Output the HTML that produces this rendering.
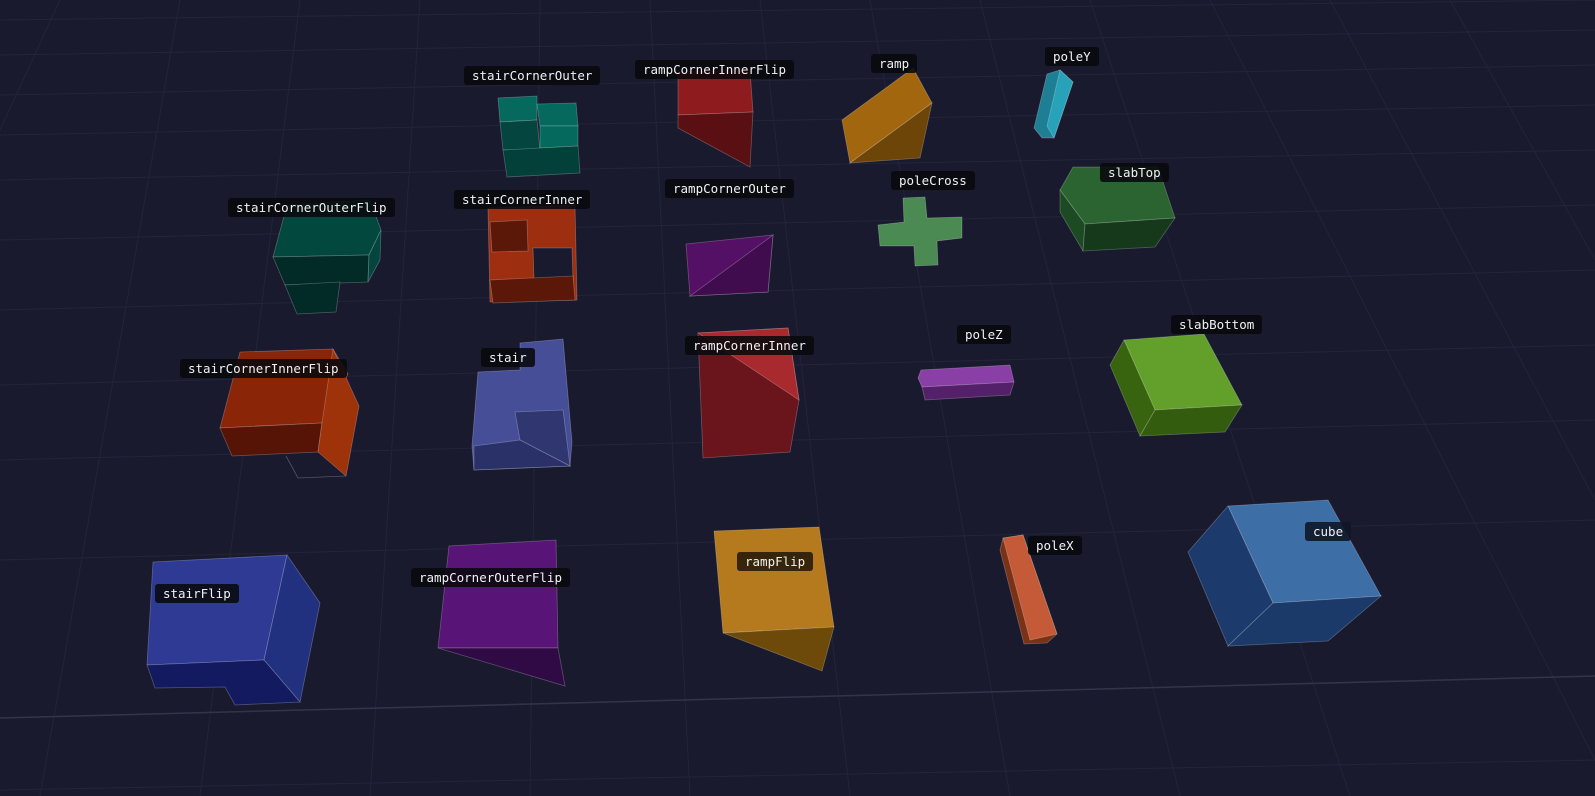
<!DOCTYPE html>
<html><head><meta charset="utf-8"><style>
html,body{margin:0;padding:0;background:#191a2e;width:1595px;height:796px;overflow:hidden}
svg{position:absolute;left:0;top:0}
.l{position:absolute;background:rgba(8,9,14,.88);color:#f2f2f2;font:12.5px/19px "DejaVu Sans Mono","Liberation Mono",monospace;padding:0 8px;border-radius:3px;white-space:nowrap}
</style></head><body>
<svg width="1595" height="796" viewBox="0 0 1595 796">
<g stroke="#23243a" stroke-width="1" fill="none">
<path d="M0 20 L1595 0 M0 55 L1595 30 M0 95 L1595 65 M0 135 L1595 105 M0 180 L1595 150 M0 240 L1595 205 M0 310 L1595 270 M0 385 L1595 345 M0 460 L1595 420 M0 560 L1595 520 M0 790 L1595 760"/>
<path d="M60 0 L0 130 M180 0 L40 796 M300 0 L200 796 M420 0 L370 796 M540 0 L530 796 M650 0 L690 796 M760 0 L850 796 M870 0 L1010 796 M980 0 L1180 796 M1090 0 L1350 796 M1210 0 L1595 760 M1330 0 L1595 500 M1450 0 L1595 260"/>
</g>
<path d="M0 718 L1595 676" stroke="#33344a" stroke-width="1.5"/>
<g stroke-width=".8" stroke-opacity=".25" stroke="#fff">
<polygon points="498,98 537,96 537,120 500,122" fill="#05695d"/>
<polygon points="500,122 537,120 540,150 503,150" fill="#04463f"/>
<polygon points="537,104 576,103 578,126 540,126" fill="#05695d"/>
<polygon points="540,126 578,126 578,146 540,148" fill="#05695d"/>
<polygon points="503,150 578,146 580,173 507,177" fill="#03403a"/>
<polygon points="678,72 750,70 753,112 678,115" fill="#8e1c1f"/>
<polygon points="678,115 753,112 750,167 678,128" fill="#5a0f12"/>
<polygon points="842,120 913,68 932,103 850,163" fill="#a2670e"/>
<polygon points="850,163 932,103 920,158" fill="#6e4508"/>
<polygon points="1047,74 1060,70 1073,82 1054,138 1042,138 1034,128" fill="#1e7f94"/>
<polygon points="1060,70 1073,82 1054,138 1047,126" fill="#28a2b8"/>
<polygon points="287,205 370,200 381,230 369,255 273,257" fill="#03483f"/>
<polygon points="273,257 369,255 368,282 285,285" fill="#022a27"/>
<polygon points="369,255 381,230 380,260 368,282" fill="#04463f"/>
<polygon points="285,285 340,282 336,312 297,314" fill="#022a27"/>
<polygon points="488,208 575,205 577,300 490,302" fill="#9e2e10"/>
<polygon points="490,222 527,220 528,251 492,252" fill="#5b1808"/>
<polygon points="533,248 572,248 573,280 534,280" fill="#191a2e"/>
<polygon points="490,280 573,276 575,300 493,303" fill="#5b1808"/>
<polygon points="686,244 773,235 768,292 690,296" fill="#531064"/>
<polygon points="773,235 768,292 690,296" fill="#410c4e"/>
<polygon points="903,198 925,197 927,218 962,217 962,238 937,241 938,265 915,266 914,246 880,246 878,225 904,222" fill="#4c8a54"/>
<polygon points="1073,167 1158,167 1175,218 1085,224 1060,190" fill="#2b6331"/>
<polygon points="1060,190 1085,224 1083,251 1060,212" fill="#1c4a22"/>
<polygon points="1085,224 1175,218 1155,247 1083,251" fill="#15391a"/>
<polygon points="921,370 1010,365 1014,382 922,387 918,378" fill="#8a3fa6"/>
<polygon points="922,387 1014,382 1010,395 925,400" fill="#55206a"/>
<polygon points="1124,340 1204,334 1242,405 1155,410" fill="#62a02b"/>
<polygon points="1110,365 1124,340 1155,410 1140,436" fill="#38640f"/>
<polygon points="1155,410 1242,405 1225,432 1140,436" fill="#345c0e"/>
<polygon points="240,352 333,349 348,374 322,423 220,428" fill="#8a2508"/>
<polygon points="220,428 322,423 318,452 232,456" fill="#551405"/>
<polygon points="333,349 359,406 346,476 318,452 322,423" fill="#9e3208"/>
<polyline points="286,456 298,478 346,476" fill="none"/>
<polygon points="520,343 563,339 572,442 570,466 474,470 472,446 478,372 520,370" fill="#464e98"/>
<polygon points="515,412 563,410 570,466 520,440" fill="#2f3670"/>
<polygon points="474,446 520,440 570,466 474,470" fill="#2a3168"/>
<polygon points="698,333 788,328 799,400 790,452 703,458" fill="#6a141c"/>
<polygon points="698,333 788,328 799,400" fill="#a82a2e"/>
<polygon points="153,562 287,555 264,660 147,665" fill="#2e3a94"/>
<polygon points="287,555 320,603 300,702 264,660" fill="#223080"/>
<polygon points="147,665 264,660 300,702 235,705 225,687 155,688" fill="#141a60"/>
<polygon points="449,546 556,540 558,648 438,648" fill="#581476"/>
<polygon points="438,648 558,648 565,686" fill="#300a45"/>
<polygon points="714,531 819,527 834,627 723,633" fill="#b67a1e"/>
<polygon points="723,633 834,627 822,671" fill="#6e4a0a"/>
<polygon points="1003,538 1023,535 1057,634 1047,643 1024,644 1000,550" fill="#7a3216"/>
<polygon points="1003,538 1023,535 1057,634 1030,640" fill="#c45a38"/>
<polygon points="1228,506 1328,500 1381,596 1273,603" fill="#3e6ea6"/>
<polygon points="1188,552 1228,506 1273,603 1228,646" fill="#1c3b6c"/>
<polygon points="1273,603 1381,596 1328,641 1228,646" fill="#1b3a69"/>
</g>
</svg>
<div class="l" style="left:464px;top:66px">stairCornerOuter</div>
<div class="l" style="left:635px;top:60px">rampCornerInnerFlip</div>
<div class="l" style="left:871px;top:54px">ramp</div>
<div class="l" style="left:1045px;top:47px">poleY</div>
<div class="l" style="left:228px;top:198px">stairCornerOuterFlip</div>
<div class="l" style="left:454px;top:190px">stairCornerInner</div>
<div class="l" style="left:665px;top:179px">rampCornerOuter</div>
<div class="l" style="left:891px;top:171px">poleCross</div>
<div class="l" style="left:1100px;top:163px">slabTop</div>
<div class="l" style="left:957px;top:325px">poleZ</div>
<div class="l" style="left:1171px;top:315px">slabBottom</div>
<div class="l" style="left:180px;top:359px">stairCornerInnerFlip</div>
<div class="l" style="left:481px;top:348px">stair</div>
<div class="l" style="left:685px;top:336px">rampCornerInner</div>
<div class="l" style="left:155px;top:584px">stairFlip</div>
<div class="l" style="left:411px;top:568px">rampCornerOuterFlip</div>
<div class="l" style="left:737px;top:552px;background:rgba(40,28,8,.9)">rampFlip</div>
<div class="l" style="left:1028px;top:536px">poleX</div>
<div class="l" style="left:1305px;top:522px;background:rgba(14,22,38,.9)">cube</div>
</body></html>
